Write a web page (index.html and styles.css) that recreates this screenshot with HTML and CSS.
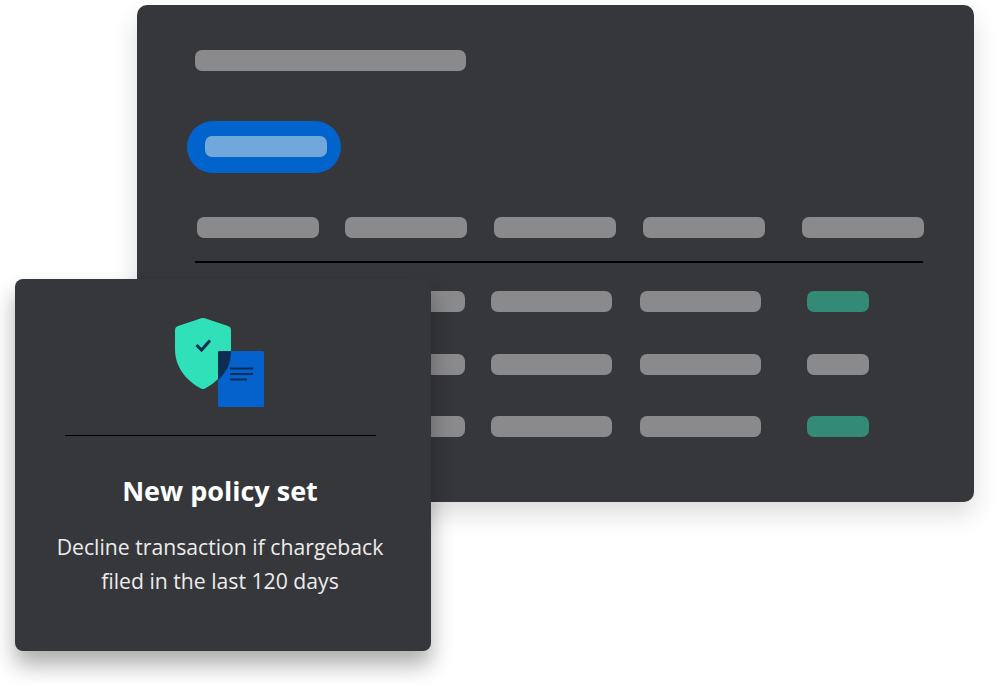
FILE: index.html
```html
<!DOCTYPE html>
<html lang="en">
<head>
    <meta charset="UTF-8">
    <title>New policy set</title>
    <link rel="stylesheet" href="styles.css">
</head>
<body>
    <div class="stage">
        <div class="panel">
            <div class="bar title-bar"></div>
            <div class="pill"><div class="pill-inner"></div></div>
            <div class="table-head">
                <div class="bar"></div>
                <div class="bar"></div>
                <div class="bar"></div>
                <div class="bar"></div>
                <div class="bar"></div>
            </div>
            <div class="table-line"></div>
            <div class="table-row">
                <div class="bar"></div>
                <div class="bar"></div>
                <div class="bar"></div>
                <div class="bar"></div>
                <div class="bar status ok"></div>
            </div>
            <div class="table-row">
                <div class="bar"></div>
                <div class="bar"></div>
                <div class="bar"></div>
                <div class="bar"></div>
                <div class="bar status"></div>
            </div>
            <div class="table-row">
                <div class="bar"></div>
                <div class="bar"></div>
                <div class="bar"></div>
                <div class="bar"></div>
                <div class="bar status ok"></div>
            </div>
        </div>

        <div class="card">
            <svg class="card-icon" width="89" height="89" viewBox="0 0 89 89">
                <path d="M28 0 Q30 0 32 1 L53 8 Q56 9 56 12 L56 31 C56 50 44 63 30 70.5 Q28 71.5 26 70.5 C12 63 0 50 0 31 L0 12 Q0 9 3 8 L24 1 Q26 0 28 0 Z" fill="#2fe0b8"/>
                <path d="M21.5 27 L26.5 32 L35 22.5" fill="none" stroke="#0d2d52" stroke-width="3"/>
                <rect x="43" y="33" width="46" height="56" rx="1.5" fill="#0562cc"/>
                <path d="M43 34.5 Q43 33 44.5 33 L56 33 C56 45 52 54 43 62 Z" fill="#0d2d52"/>
                <path d="M55 50.5 H78 M55 56 H78 M55 61.5 H72" fill="none" stroke="#0d2d52" stroke-width="2"/>
            </svg>
            <div class="card-line"></div>
            <h2>New policy set</h2>
            <p>Decline transaction if chargeback<br>filed in the last 120 days</p>
        </div>
    </div>
</body>
</html>
```

FILE: styles.css
```css
body {
    margin: 0;
    background-color: #ffffff;
    font-family: "Open Sans", sans-serif;
}
.stage {
    position: relative;
    height: 686px;
    padding: 5px 0 0 137px;
    box-sizing: border-box;
    overflow: hidden;
}
.panel {
    width: 837px;
    height: 497px;
    padding: 45px 0 0 58px;
    box-sizing: border-box;
    background-color: #36373b;
    border-radius: 10px;
    box-shadow: 0 12px 26px rgba(0, 0, 0, 0.14);
}
.bar {
    width: 121px;
    height: 21px;
    background-color: #8a8a8c;
    border-radius: 7px;
}
.title-bar {
    width: 271px;
}
.pill {
    width: 154px;
    height: 52px;
    margin: 50px 0 0 -8px;
    padding: 15px 0 0 18px;
    box-sizing: border-box;
    background-color: #0064cc;
    border-radius: 26px;
}
.pill-inner {
    width: 122px;
    height: 21px;
    background-color: #72a7dc;
    border-radius: 7px;
}
.table-head {
    display: grid;
    grid-template-columns: 148px 149px 149px 159px 122px;
    margin: 44px 0 0 2px;
}
.table-head .bar {
    width: 121.5px;
}
.table-line {
    width: 728px;
    height: 2px;
    margin-top: 23px;
    background-color: #000000;
}
.table-row {
    display: grid;
    grid-template-columns: 149px 147px 149px 166.5px 62px;
    margin-top: 41px;
}
.table-line + .table-row {
    margin-top: 28px;
}
.table-line + .table-row + .table-row {
    margin-top: 42px;
}
.status {
    width: 62px;
}
.ok {
    background-color: #338a76;
}
.card {
    position: absolute;
    left: 15px;
    top: 279px;
    width: 416px;
    height: 372px;
    padding: 39px 6px 0 0;
    box-sizing: border-box;
    background-color: #36373b;
    border-radius: 8px;
    box-shadow: 0 14px 22px rgba(0, 0, 0, 0.32);
    color: #ffffff;
    text-align: center;
}
.card-icon {
    display: block;
    margin-left: 160px;
}
.card-line {
    width: 311px;
    height: 1px;
    margin: 28px 0 0 50px;
    background-color: #000000;
}
.card h2 {
    margin: 37px 0 0;
    font-size: 27px;
    line-height: 36px;
    font-weight: 700;
}
.card p {
    margin: 21px 0 0;
    font-size: 21.2px;
    line-height: 34px;
    color: #ececec;
}
```
